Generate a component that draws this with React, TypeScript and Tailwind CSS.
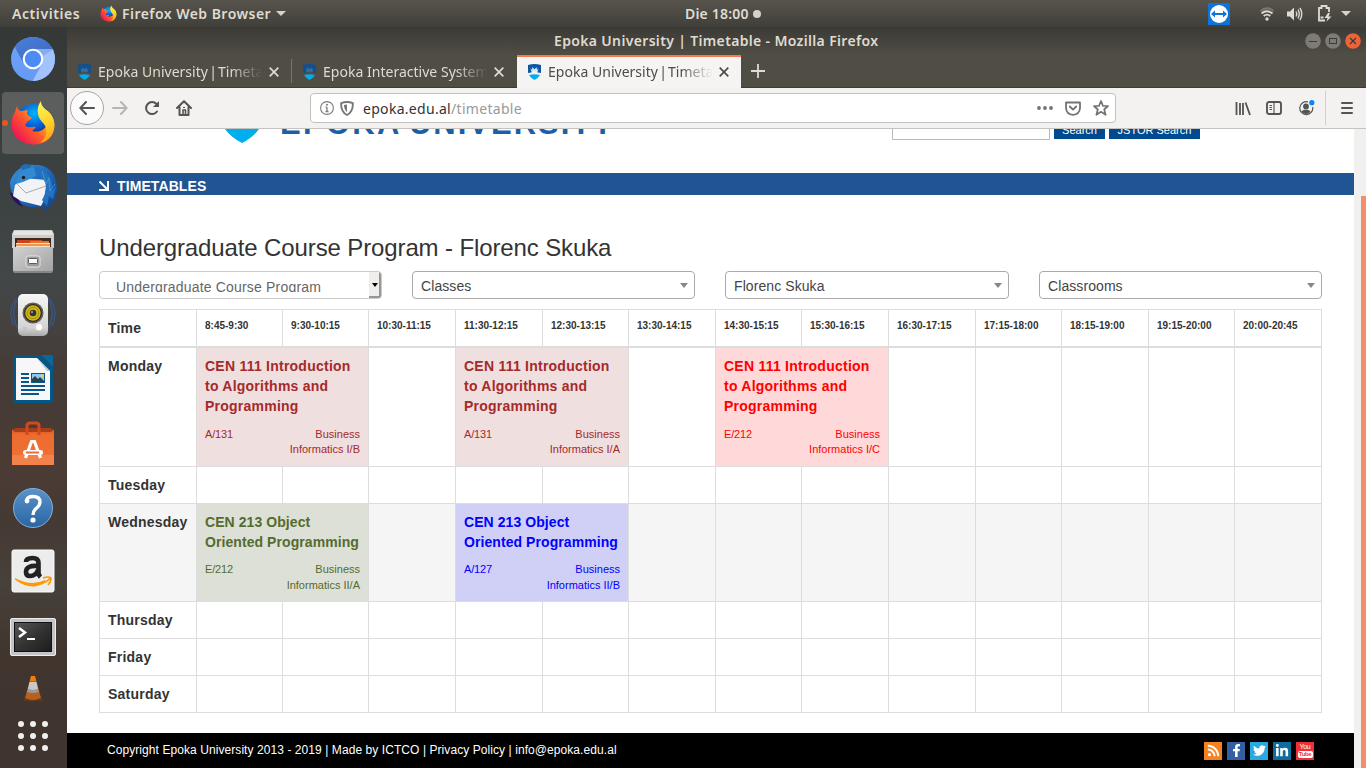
import React from "react";
import { FaFacebookF, FaTwitter, FaLinkedinIn, FaRss } from "react-icons/fa";

const ui = "font-['Noto_Sans','Open_Sans',sans-serif]";

/* ---------- dock icons ---------- */

function Chromium() {
  return (
    <svg width="46" height="46" viewBox="0 0 46 46">
      <defs>
        <clipPath id="cr"><circle cx="23" cy="23" r="22" /></clipPath>
        <linearGradient id="crt" x1="0" y1="0" x2="1" y2="1">
          <stop offset="0" stopColor="#4b80dd" /><stop offset="1" stopColor="#3b66bd" />
        </linearGradient>
        <linearGradient id="crl" x1="0" y1="0" x2="0" y2="1">
          <stop offset="0" stopColor="#72a4f8" /><stop offset="1" stopColor="#6499f5" />
        </linearGradient>
      </defs>
      <g clipPath="url(#cr)">
        <rect width="46" height="46" fill="url(#crl)" />
        <path d="M3 8 L14 28 L23 13 H46 V0 H3Z" fill="url(#crt)" />
        <path d="M23 13 H46 V46 H22 L32 28 Z" fill="#a2c3fb" />
        <path d="M23 13H44L33 20Z" fill="#86abef" />
      </g>
      <circle cx="23" cy="23" r="10.3" fill="#fff" />
      <circle cx="23" cy="23" r="8.2" fill="#4c8bf5" />
    </svg>
  );
}

function Firefox({ size = 46, id }: { size?: number; id: string }) {
  return (
    <svg width={size} height={size} viewBox="0 0 46 46">
      <defs>
        <radialGradient id={id + "g"} cx="0.5" cy="0.25" r="0.6">
          <stop offset="0" stopColor="#00b6f5" /><stop offset="0.5" stopColor="#0867df" /><stop offset="1" stopColor="#102b7c" />
        </radialGradient>
        <linearGradient id={id + "b"} x1="0.95" y1="0.1" x2="0.1" y2="0.75">
          <stop offset="0" stopColor="#ffe53a" /><stop offset="0.3" stopColor="#ffb51b" /><stop offset="0.58" stopColor="#ff6128" /><stop offset="1" stopColor="#f21851" />
        </linearGradient>
        <linearGradient id={id + "y"} x1="0.4" y1="0" x2="0.6" y2="1">
          <stop offset="0" stopColor="#fff44f" /><stop offset="0.55" stopColor="#ffd02b" /><stop offset="1" stopColor="#ff9a18" />
        </linearGradient>
      </defs>
      <circle cx="24" cy="23" r="19" fill={`url(#${id}g)`} />
      <path d="M7 6 C8 10 9 11 12 11 L18 10 C16 13 17 15 19 16 L22 18 L17 22 L15 25 C18 29 22 26 26 27 L22 31 C30 33 35 29 36 26 L40 14 C46 20 46 32 39 39 C30 47 15 46 7 38 C0 31 0 20 5 12Z" fill={`url(#${id}b)`} />
      <path d="M31 1 C31 6 34 8 38 11 C46 18 47 31 38 39 C36 41 33 42 30 43 C36 38 37 33 36 28 C35 23 29 21 28 14 C27 9 28 5 31 1Z" fill={`url(#${id}y)`} />
    </svg>
  );
}

function Thunderbird() {
  return (
    <svg width="50" height="50" viewBox="0 0 50 50">
      <defs>
        <linearGradient id="tb" x1="0" y1="0" x2="1" y2="1">
          <stop offset="0" stopColor="#3b94d8" /><stop offset="0.5" stopColor="#1f67b9" /><stop offset="1" stopColor="#143b84" />
        </linearGradient>
      </defs>
      <path d="M2 20 C5 9 16 1 27 3 C40 2 48 12 49 24 C50 36 44 45 35 49 L37 44 L31 45 C14 47 2 36 2 20Z" fill="url(#tb)" />
      <path d="M2 30 L8 34 L15 45 C8 42 3 37 2 30Z" fill="#26135c" />
      <path d="M7 23 L14 16 L39 18 L36 38 L33 44 L13 39 L5 34Z" fill="#f2f3f6" />
      <path d="M8 21 L18 31 L38 24" fill="none" stroke="#aaa" strokeWidth="1" />
      <path d="M8 22 C9 11 15 6 23 4 C30 8 31 14 24 16 L15 20Z" fill="#328bd0" />
      <path d="M12 5 C16 1 21 1 24 5 L15 8Z" fill="#226bb4" />
      <circle cx="15.5" cy="15.5" r="1.7" fill="#281a16" />
      <path d="M26 5 C39 7 46 17 44 29 L48 24 L45 37 L41 34 L39 44 L34 38 C42 25 37 15 28 13Z" fill="#2372bd" />
      <path d="M34 9L38 22L41 16L42 29L47 22" fill="none" stroke="#4a9bda" strokeWidth="0.8" />
    </svg>
  );
}

function Files() {
  return (
    <svg className="mt-px" width="44" height="46" viewBox="0 0 44 46">
      <defs>
        <linearGradient id="fl" x1="0" y1="0" x2="1" y2="1">
          <stop offset="0" stopColor="#d2d2d2" /><stop offset="1" stopColor="#a1a1a1" />
        </linearGradient>
      </defs>
      <path d="M3 1 H41 L43 5 V19 H1 V5Z" fill="#ccc" />
      <path d="M3 2H41L42 6H2Z" fill="#e4e4e4" />
      <rect x="4" y="9" width="36" height="10" fill="#3c2a20" />
      <rect x="6" y="11" width="25" height="3" fill="#c9431c" /><rect x="19" y="12" width="19" height="3" fill="#e6752c" />
      <rect x="5" y="14" width="34" height="4" fill="#f2e1cc" /><rect x="5" y="15" width="34" height="2" fill="#f0944a" />
      <path d="M2 18H42V41L41 44H3L2 41Z" fill="url(#fl)" />
      <path d="M3 42H41V44H3Z" fill="#858585" />
      <rect x="15" y="27" width="14" height="11" rx="2" fill="#9d9d9d" stroke="#e5e5e5" />
      <rect x="17.5" y="29.5" width="9" height="5" rx="1" fill="#fafafa" stroke="#5b5b5b" />
    </svg>
  );
}

function Speaker() {
  return (
    <svg width="50" height="46" viewBox="0 0 50 46">
      <defs>
        <linearGradient id="sp" x1="0" y1="0" x2="0" y2="1">
          <stop offset="0" stopColor="#f6f6f6" /><stop offset="0.8" stopColor="#d4d4d2" /><stop offset="1" stopColor="#aaa" />
        </linearGradient>
      </defs>
      <g fill="none" stroke="#37588b" strokeWidth="1.2">
        <path d="M8 7 Q-1 20 6 34" /><path d="M11 5 Q1 20 10 37" /><path d="M42 7 Q51 20 44 34" /><path d="M39 5 Q49 20 40 37" />
      </g>
      <rect x="10" y="2" width="30" height="42" rx="5" fill="url(#sp)" />
      <circle cx="25" cy="21" r="10.5" fill="#5c5c5a" />
      <circle cx="25" cy="21" r="8.3" fill="#d5b80d" stroke="#2c2b25" strokeWidth="1.2" />
      <circle cx="25" cy="21" r="5.7" fill="none" stroke="#a18b11" />
      <circle cx="25" cy="21" r="3.3" fill="#2e3438" /><circle cx="24" cy="20" r="1.2" fill="#8a9499" />
      <circle cx="31" cy="35" r="3.7" fill="#fff" stroke="#bbb" strokeWidth=".5" /><rect x="15" y="35" width="4" height="4" fill="#c4c4c4" />
    </svg>
  );
}

function Writer() {
  return (
    <svg width="42" height="48" viewBox="0 0 42 48">
      <path d="M3 0 H28 L41 13 V45 Q41 48 38 48 H4 Q1 48 1 45 V3 Q1 0 3 0Z" fill="#045687" />
      <path d="M29 0H39Q41 0 41 2V12Z" fill="#0369a3" />
      <path d="M4 3H25L38 16V45H4Z" fill="#f7f7f7" />
      <path d="M25 3L38 16L35 16Z" fill="#bcc9d2" />
      <g fill="#07578a"><rect x="9" y="18" width="8" height="2" /><rect x="9" y="22" width="8" height="2" /><rect x="9" y="26" width="8" height="2" /><rect x="9" y="30" width="24" height="2" /><rect x="9" y="34" width="24" height="2" /><rect x="9" y="38" width="18" height="2" /></g>
      <rect x="19.5" y="18.5" width="13" height="9" fill="#8cc8f0" stroke="#07578a" />
      <circle cx="30" cy="20.5" r="1.5" fill="#e6d258" />
      <path d="M20 27V24L23 21L26 24L28 22L32 26V27Z" fill="#304045" />
    </svg>
  );
}

function Software() {
  return (
    <svg className="mt-px" width="44" height="46" viewBox="0 0 44 46">
      <defs><linearGradient id="sw" x1="0" y1="0" x2="0" y2="1"><stop offset="0" stopColor="#d9501f" /><stop offset=".15" stopColor="#ee6b2d" /><stop offset="1" stopColor="#ee723a" /></linearGradient></defs>
      <path d="M1 11L4 7H40L43 11Z" fill="#a73e1b" />
      <path d="M1 8 L4 11H40L43 8 V44H1Z" fill="url(#sw)" />
      <path d="M1 34H43V44H1Z" fill="#f3814c" />
      <path d="M16 14V5Q16 2 19 2H25Q28 2 28 5V14" fill="none" stroke="#cf4a20" strokeWidth="3" />
      <path d="M14.500 37L20.500 20.500H23.500L29.500 37" fill="none" stroke="#fff" strokeWidth="3.2" />
      <rect x="12" y="29" width="20" height="5" rx="2.5" fill="#fff" /><rect x="15" y="30.5" width="13" height="2" fill="#ed6b34" />
    </svg>
  );
}

function Help() {
  return (
    <svg className="mt-[2px]" width="42" height="42" viewBox="0 0 42 42">
      <defs><linearGradient id="hp" x1="0" y1="0" x2="0" y2="1"><stop offset="0" stopColor="#5b92c9" /><stop offset="1" stopColor="#2866a3" /></linearGradient></defs>
      <circle cx="21" cy="21" r="19.5" fill="url(#hp)" stroke="#83b0da" strokeWidth="1" />
      <path d="M14.500 14Q15 9.500 21 9.500Q28 9.500 28 15Q28 18.500 24 21.500Q21 24 21 28" fill="none" stroke="#fff" strokeWidth="3.300" />
      <circle cx="15" cy="14" r="2.4" fill="#fff" /><circle cx="21" cy="33" r="2.6" fill="#fff" />
    </svg>
  );
}

function Amazon() {
  return (
    <svg width="44" height="44" viewBox="0 0 44 44">
      <rect x="1" y="1" width="42" height="42" rx="2" fill="#ececec" stroke="#fafafa" />
      <path d="M15 13Q15 9 21.500 9Q27.500 9 27.500 14V24Q27.500 26 29.500 28M27 17Q15 16 15 23Q15 27 19 27Q25 27 27 21" fill="none" stroke="#222" strokeWidth="4.600" />
      <path d="M4 29Q20 38 34 31L35.500 33Q20 43 4 30.500Z" fill="#ff9900" />
      <path d="M32 29Q38 27 40 29Q40 33 37 36M39.500 28.800L35 33" fill="none" stroke="#ff9900" strokeWidth="1.600" />
    </svg>
  );
}

function Terminal() {
  return (
    <svg width="46" height="38" viewBox="0 0 46 38">
      <defs><linearGradient id="tm" x1="0" y1="0" x2="1" y2="1"><stop offset="0" stopColor="#575757" /><stop offset=".5" stopColor="#333" /><stop offset="1" stopColor="#1d1d1d" /></linearGradient></defs>
      <rect x=".5" y=".5" width="45" height="37" rx="1.500" fill="#c4c4c8" stroke="#ececec" />
      <rect x="4" y="4" width="38" height="30" fill="#111" /><rect x="5" y="5" width="36" height="28" fill="url(#tm)" />
      <path d="M9 10L15 14.500L9 19" fill="none" stroke="#fff" strokeWidth="2.500" /><rect x="17" y="20" width="8" height="2" fill="#fff" />
    </svg>
  );
}

function Vlc() {
  return (
    <svg width="22" height="28" viewBox="0 0 22 28">
      <path d="M3 22H19L21 26H1Z" fill="#5c3a24" />
      <path d="M9 1H13L19 23Q11 27 3 23Z" fill="#b9601c" /><path d="M9 1H13L14 6H8Z" fill="#ef7d10" />
      <path d="M7.500 7H14.500L16 14Q11 16 6 14Z" fill="#c9c9c9" /><path d="M6 14Q11 16 16 14L17 17Q11 19 5 17Z" fill="#9a9a98" />
    </svg>
  );
}

function AppsGrid() {
  return (
    <div className="grid grid-cols-3 gap-[6px]">
      {Array.from({ length: 9 }, (_, i) => <span key={i} className="size-[6px] rounded-full bg-[#f0f0ee]" />)}
    </div>
  );
}

function Dock() {
  const slots = [<Chromium />, <Firefox id="dock" />, <Thunderbird />, <Files />, <Speaker />, <Writer />, <Software />, <Help />, <Amazon />];
  return (
    <nav className="flex w-[67px] shrink-0 flex-col items-center bg-[linear-gradient(180deg,#343837_0%,#3d4343_25%,#424747_34%,#444342_39%,#453b37_46%,#4b3b35_60%,#443a33_67%,#46413a_75%,#41352e_85%,#3f352e_100%)] pr-px">
      {slots.map((icon, i) => (
        <div key={i} className="flex h-16 w-full shrink-0 items-center justify-center">
          {i === 1 ? (
            <div className="relative flex h-[62px] w-[62px] items-center justify-center rounded-[4px] bg-[#5b5e5d]">
              <span className="absolute left-0 top-[28px] size-[6px] rounded-full bg-[#e95420]" />
              {icon}
            </div>
          ) : icon}
        </div>
      ))}
      <div className="flex h-[67px] items-center"><Terminal /></div>
      <div className="flex h-[38px] items-center"><Vlc /></div>
      <div className="flex h-[56px] items-center"><AppsGrid /></div>
    </nav>
  );
}

/* ---------- desktop bar ---------- */

function TopBar() {
  return (
    <header className={`${ui} flex h-[27px] shrink-0 items-center bg-linear-to-b from-[#57544c] to-[#403f3a] text-[14px] font-semibold text-[#dfdbd2]`}>
      <span className="ml-3 w-[88px] pb-px tracking-[0.58px]">Activities</span>
      <Firefox size={17} id="bar" />
      <span className="ml-[5px] w-[154px] whitespace-nowrap pb-px tracking-[0.46px]">Firefox Web Browser</span>
      <svg width="10" height="5" viewBox="0 0 10 5"><path d="M0 0H10L5 5Z" fill="#d5d2ca" /></svg>
      <span className="ml-[399px] w-[64px] whitespace-nowrap pb-px tracking-[0.2px]">Die 18:00</span>
      <span className="ml-[4px] size-2 rounded-full bg-[#d5d2ca]" />
      <div className="flex-1" />
      <svg width="22" height="22" viewBox="0 0 22 22">
        <rect width="22" height="22" fill="#0e74d8" /><circle cx="11" cy="11" r="9" fill="#fff" />
        <path d="M3 11L7 7.500V10H15V7.500L19 11L15 14.500V12H7V14.500Z" fill="#0e74d8" />
      </svg>
      <svg className="ml-[30px]" width="14" height="14" viewBox="0 0 14 14" fill="none" stroke="#dfdbd2" strokeWidth="1.800">
        <path d="M0.500 4Q7-1.500 13.500 4" stroke="#7c7971" /><path d="M1.500 6.500Q7 2 12.500 6.500" /><path d="M3.700 9Q7 6.200 10.300 9" /><circle cx="7" cy="12" r="1.700" fill="#dfdbd2" stroke="none" />
      </svg>
      <svg className="ml-[13px]" width="16" height="14" viewBox="0 0 16 14">
        <path d="M0 4.500H3L7 0.500V13.500L3 9.500H0Z" fill="#dfdbd2" />
        <path d="M9 4.500Q10.500 7 9 9.500M11 2.500Q13.500 7 11 11.500M13 0.800Q16.500 7 13 13.200" fill="none" stroke="#dfdbd2" strokeWidth="1.400" />
      </svg>
      <svg className="ml-[14px]" width="15" height="17" viewBox="0 0 15 17">
        <path d="M8 15.500H2V3H4.500V1H9.500V3H12V7" fill="none" stroke="#dfdbd2" strokeWidth="1.800" />
        <path d="M11 8L7.500 13H10.500L9.500 16.500L14.500 11.500H11.500L13 8Z" fill="#dfdbd2" /><rect x="3.500" y="11.500" width="3" height="2" fill="#dfdbd2" />
      </svg>
      <svg className="ml-[9px] mr-[15px]" width="10" height="5" viewBox="0 0 10 5"><path d="M0 0H10L5 5Z" fill="#d5d2ca" /></svg>
    </header>
  );
}

/* ---------- browser ---------- */

function Shield({ dim = false }: { dim?: boolean }) {
  return (
    <svg className="shrink-0" width="13" height="16" viewBox="0 0 13 16">
      <path d="M0 1Q6.500-1 13 1V9H0Z" fill={dim ? "#0f508f" : "#0b57a4"} />
      <path d="M2.500 4L4 6L4.500 3L6.500 5.500L8.500 3L9 6L10.500 4L9.500 8H3.500Z" fill={dim ? "#3d6c9c" : "#dfe9f3"} />
      <path d="M0 9L3 8.500Q6.500 6.500 10 8.500L13 9L12 11H1Z" fill={dim ? "#514e45" : "#f5f4f2"} />
      <path d="M1 11Q6.500 9.500 12 11Q10 14.500 6.500 16Q3 14.500 1 11Z" fill="#00aeef" />
    </svg>
  );
}

function Tab({ title, active = false }: { title: React.ReactNode; active?: boolean }) {
  return (
    <div className={active
      ? "flex h-[33px] w-[224px] items-center border-t-2 border-[#f37c4f] bg-[#f5f4f2] pb-px pl-[11px] text-[#4c4c4c]"
      : "flex h-8 w-[224px] items-center border-t-2 border-transparent pl-[11px] text-[#dfdbd2]"}>
      <Shield dim={!active} />
      <span className="ml-[7px] w-[166px] shrink-0 overflow-hidden whitespace-nowrap text-[14px] leading-5 tracking-[0.02px] [mask-image:linear-gradient(90deg,#000_80%,transparent_99%)]">{title}</span>
      <svg className="ml-[5px] shrink-0" width="10" height="10" viewBox="0 0 10 10"><path d="M.7.7L9.300 9.300M9.300.7L.7 9.300" stroke={active ? "#4c4c4c" : "#dfdbd2"} strokeWidth="1.700" /></svg>
    </div>
  );
}

const timetableTitle = <>Epoka University<span className="[word-spacing:-2.500px]"> | </span>Timetable</>;

function TitleBar() {
  return (
    <div className="flex h-7 items-center bg-linear-to-b from-[#3b3a35] to-[#504d45] pl-[487px] pr-[5px]">
      <span className="whitespace-nowrap pb-[2px] text-[14px] font-semibold tracking-[0.34px] text-[#dfdbd2]">Epoka University | Timetable - Mozilla Firefox</span>
      <div className="ml-auto flex gap-1">
        <svg width="16" height="16" viewBox="0 0 16 16"><circle cx="8" cy="8" r="7.800" fill="#7d7b73" /><path d="M4 8.500H12" stroke="#3c3b37" /></svg>
        <svg width="16" height="16" viewBox="0 0 16 16"><circle cx="8" cy="8" r="7.800" fill="#7d7b73" /><rect x="4.500" y="5.500" width="7" height="5" fill="none" stroke="#3c3b37" /></svg>
        <svg width="16" height="16" viewBox="0 0 16 16"><circle cx="8" cy="8" r="7.800" fill="#ec6339" /><path d="M5 5L11 11M11 5L5 11" stroke="#3c3b37" strokeWidth="1.300" /></svg>
      </div>
    </div>
  );
}

function Toolbar() {
  return (
    <div className="flex h-[41px] items-center border-b border-[#c5c3c0] bg-[#f3f2f1] text-[#5b5b5b]">
      <div className="ml-[3px] flex size-[34px] shrink-0 items-center justify-center rounded-full border border-[#a5a5a3] bg-[#fbfbfb]">
        <svg width="16" height="14" viewBox="0 0 16 14" fill="none" stroke="#545454" strokeWidth="2" strokeLinecap="round"><path d="M15 7H1.500M7 1L1.300 7L7 13" /></svg>
      </div>
      <svg className="ml-2" width="16" height="14" viewBox="0 0 16 14" fill="none" stroke="#b5b5b4" strokeWidth="2" strokeLinecap="round"><path d="M1 7H14.500M9 1L14.700 7L9 13" /></svg>
      <svg className="ml-4" width="16" height="16" viewBox="0 0 16 16"><path d="M13 11.500A6 6 0 1 1 12.500 4" fill="none" stroke="#545454" strokeWidth="2" strokeLinecap="round" /><path d="M15 1V7H9Z" fill="#545454" /></svg>
      <svg className="ml-4" width="16" height="16" viewBox="0 0 16 16" fill="none" stroke="#545454" strokeWidth="2" strokeLinejoin="round"><path d="M1 8L8 1.200L15 8M3.500 7V15H12.500V7" strokeLinecap="round" /><path d="M7 15V10H9.500V15" strokeWidth="1.600" /><rect x="7" y="7" width="2" height="1" fill="#545454" stroke="none" /></svg>
      <div className="ml-[118px] flex h-[30px] w-[806px] shrink-0 items-center rounded-[4px] border border-[#c3c1be] bg-white">
        <svg className="ml-[9px]" width="14" height="14" viewBox="0 0 14 14"><circle cx="7" cy="7" r="6.400" fill="none" stroke="#7c7c7c" strokeWidth="1.100" /><path d="M7 6.200V10.500M5.500 6.200H7M5.500 10.500H8.500" stroke="#7c7c7c" strokeWidth="1.300" /><circle cx="7" cy="3.800" r="1" fill="#7c7c7c" /></svg>
        <svg className="ml-[6px]" width="14" height="15" viewBox="0 0 14 15"><path d="M1.200 2.200Q7-.2 12.800 2.200Q13.300 10.500 7 14Q.7 10.500 1.200 2.200Z" fill="none" stroke="#777" strokeWidth="1.900" /><path d="M7 3.500Q4.500 3.500 4 4Q4 8.500 7 11Z" fill="#777" /></svg>
        <span className="ml-[9px] whitespace-nowrap text-[14px] tracking-[0.3px] text-[#333]">epoka.edu.al<span className="text-[#999]">/timetable</span></span>
        <div className="flex-1" />
        <svg width="16" height="4" viewBox="0 0 16 4" fill="#737373"><circle cx="2" cy="2" r="1.900" /><circle cx="8" cy="2" r="1.900" /><circle cx="14" cy="2" r="1.900" /></svg>
        <svg className="ml-3" width="16" height="15" viewBox="0 0 16 15" fill="none" stroke="#737373" strokeWidth="1.800" strokeLinejoin="round"><path d="M1 1.500H15V7Q14.500 13.500 8 13.800Q1.500 13.500 1 7Z" /><path d="M4.800 5.500L8 8.700L11.200 5.500" strokeLinecap="round" /></svg>
        <svg className="ml-3 mr-[6px]" width="16" height="16" viewBox="0 0 16 16" fill="none" stroke="#737373" strokeWidth="1.700" strokeLinejoin="round"><path d="M8 1L10 6H15L11.200 9.500L12.600 14.800L8 11.800L3.400 14.800L4.800 9.500L1 6H6Z" /></svg>
      </div>
      <div className="flex-1" />
      <svg width="16" height="15" viewBox="0 0 16 15" fill="none" stroke="#545454" strokeWidth="1.800"><path d="M1.500 1V14M5 2V14M8 2V14M10.500 1.500L15 14" /></svg>
      <svg className="ml-[15px]" width="16" height="14" viewBox="0 0 16 14" fill="none" stroke="#545454"><rect x="1" y="1" width="14" height="12" rx="2" strokeWidth="1.900" /><path d="M8 1V13M3.500 4.500H6M3.500 6.500H6M3.500 8.500H6" strokeWidth="1.100" /></svg>
      <svg className="ml-[17px]" width="16" height="16" viewBox="0 0 16 16"><path d="M9 1.800A6.500 6.500 0 1 0 13.700 7" fill="none" stroke="#545454" strokeWidth="1.200" /><circle cx="7" cy="6.500" r="2.900" fill="#545454" /><path d="M2.500 11.500Q4.500 9 7 10Q9.500 9 11.500 11.500Q9.500 14 7 14Q4.500 14 2.500 11.500Z" fill="#545454" /><circle cx="12.800" cy="2.700" r="2.600" fill="#0a84ff" /></svg>
      <span className="ml-[10px] h-[34px] w-px bg-[#d3d1cf]" />
      <svg className="ml-[15px] mr-[13px]" width="12" height="12" viewBox="0 0 12 12" stroke="#545454" strokeWidth="2" strokeLinecap="round"><path d="M1 1H11M1 6H11M1 11H11" /></svg>
    </div>
  );
}

/* ---------- page ---------- */

type Lesson = { col: number; title: string; room: string; group: string; tone: string };
type Day = { name: string; height: string; striped?: boolean; titleSpacing?: string; metaSpacing?: string; lessons: Lesson[] };

const times = ["8:45-9:30", "9:30-10:15", "10:30-11:15", "11:30-12:15", "12:30-13:15", "13:30-14:15", "14:30-15:15", "15:30-16:15", "16:30-17:15", "17:15-18:00", "18:15-19:00", "19:15-20:00", "20:00-20:45"];

const intro = "CEN 111 Introduction to Algorithms and Programming";
const oop = "CEN 213 Object Oriented Programming";

const days: Day[] = [
  { name: "Monday", height: "h-[119px]", titleSpacing: "tracking-[0.24px]", metaSpacing: "mt-[11px] leading-[15px]", lessons: [
    { col: 0, title: intro, room: "A/131", group: "Business Informatics I/B", tone: "bg-[#f0dfdf] text-[#a52a2a]" },
    { col: 3, title: intro, room: "A/131", group: "Business Informatics I/A", tone: "bg-[#f0dfdf] text-[#a52a2a]" },
    { col: 6, title: intro, room: "E/212", group: "Business Informatics I/C", tone: "bg-[#ffd9d9] text-[#ff0000]" },
  ] },
  { name: "Tuesday", height: "h-[37px]", lessons: [] },
  { name: "Wednesday", height: "h-[98px]", striped: true, titleSpacing: "tracking-[0.07px]", metaSpacing: "mt-[10px] leading-[15.5px]", lessons: [
    { col: 0, title: oop, room: "E/212", group: "Business Informatics II/A", tone: "bg-[#dde0d6] text-[#556b2f]" },
    { col: 3, title: oop, room: "A/127", group: "Business Informatics II/B", tone: "bg-[#d0d0f7] text-[#0000ff]" },
  ] },
  { name: "Thursday", height: "h-[37px]", lessons: [] },
  { name: "Friday", height: "h-[37px]", lessons: [] },
  { name: "Saturday", height: "h-[37px]", lessons: [] },
];

function DayRow({ day }: { day: Day }) {
  const cells: React.ReactNode[] = [];
  for (let c = 0; c < times.length; c++) {
    const lesson = day.lessons.find((l) => l.col === c);
    if (lesson) {
      cells.push(
        <td key={c} colSpan={2} className={`border-b border-l border-[#dddddd] p-2 pb-0 align-top ${lesson.tone}`}>
          <div className={`text-[14px] font-bold leading-5 ${day.titleSpacing}`}>{lesson.title}</div>
          <div className={`flex justify-between text-[11px] ${day.metaSpacing}`}>
            <span className="tracking-[-0.15px]">{lesson.room}</span>
            <span className="w-[78px] text-right">{lesson.group}</span>
          </div>
        </td>
      );
      c++;
    } else {
      cells.push(<td key={c} className="border-b border-l border-[#dddddd]" />);
    }
  }
  return (
    <tr className={`${day.height} ${day.striped ? "bg-[#f5f5f5]" : "bg-white"}`}>
      <th className="border-b border-l border-[#dddddd] px-2 pt-2 text-left align-top text-[14px] font-bold leading-5 tracking-[0.23px]">{day.name}</th>
      {cells}
    </tr>
  );
}

function Timetable() {
  return (
    <table className="mt-[10px] w-[1223px] table-fixed border-separate border-spacing-0 border-r border-t border-[#dddddd]">
      <colgroup>
        <col className="w-[97px]" /><col className="w-[86px]" /><col className="w-[86px]" /><col className="w-[87px]" /><col className="w-[87px]" />
        <col className="w-[86px]" /><col className="w-[87px]" /><col className="w-[86px]" /><col className="w-[87px]" /><col className="w-[87px]" />
        <col className="w-[86px]" /><col className="w-[87px]" /><col className="w-[86px]" /><col className="w-[87px]" />
      </colgroup>
      <thead>
        <tr className="h-[38px]">
          <th className="border-b-2 border-l border-[#dddddd] px-2 pt-2 text-left align-top text-[14px] font-bold leading-5 tracking-[0.2px]">Time</th>
          {times.map((t) => <th key={t} className="border-b-2 border-l border-[#dddddd] px-2 pt-2 text-left align-top text-[10px] font-bold leading-[15px]">{t}</th>)}
        </tr>
      </thead>
      <tbody>{days.map((d) => <DayRow key={d.name} day={d} />)}</tbody>
    </table>
  );
}

function Select({ label }: { label: string }) {
  return (
    <div className="flex h-7 items-center justify-between rounded-[4px] border border-[#aaaaaa] bg-white pl-2 pr-[6px] pt-px text-[14px] text-[#444]">
      <span className="pt-[2px] tracking-[0.08px]">{label}</span>
      <svg width="8" height="5" viewBox="0 0 8 5"><path d="M0 0H8L4 5Z" fill="#888" /></svg>
    </div>
  );
}

function Filters() {
  return (
    <div className="mt-[9px] grid w-[1223px] grid-cols-[283px_283px_284px_283px] gap-[30px]">
      <div className="flex h-7 justify-between overflow-hidden rounded-[4px] border border-[#cccccc]">
        <span className="ml-4 mt-[5px] h-[15px] overflow-hidden text-[14px] leading-[20px] tracking-[0.18px] text-[#666]">Undergraduate Course Program</span>
        <span className="flex w-[12px] items-center justify-center border-b-2 border-r-2 border-[#969696] bg-[#efeeed] pl-[2px] pt-[2px]">
          <svg width="6" height="4" viewBox="0 0 6 4"><path d="M0 0H6L3 4Z" fill="#000" /></svg>
        </span>
      </div>
      <Select label="Classes" />
      <Select label="Florenc Skuka" />
      <Select label="Classrooms" />
    </div>
  );
}

function SiteHeader() {
  return (
    <div className="flex h-[44px] items-start overflow-hidden">
      <svg className="ml-[157px] shrink-0" width="36" height="15" viewBox="0 0 36 15"><path d="M1 0H35Q29 8.500 18 14Q7 8.500 1 0Z" fill="#00aeef" /></svg>
      <div className="ml-[20px] mt-[-25px] flex h-10 w-[335px] shrink-0 whitespace-nowrap text-[31px] font-bold leading-10 text-[#1b5faa]">
        <span className="w-[132px] tracking-[2.300px]">EPOKA</span>
        <span className="tracking-[2px]">UNIVERSITY</span>
      </div>
      <div className="ml-[277px] flex gap-1 text-[11px] leading-[15px] text-white">
        <span className="-mt-[11px] h-[22px] w-[158px] border border-[#bbb]" />
        <span className="-mt-[11px] h-[21px] w-[51px] bg-[#004a8f] pt-[5px] text-center">Search</span>
        <span className="-mt-[11px] h-[21px] w-[91px] bg-[#004a8f] pt-[5px] text-center">JSTOR Search</span>
      </div>
    </div>
  );
}

function YouTube() {
  return (
    <span className="flex size-[18px] flex-col items-center bg-[#ee3038] font-['Liberation_Sans',sans-serif] text-white">
      <span className="mt-px text-[7px] leading-[7px] tracking-[-0.3px]">You</span>
      <span className="mt-px h-[7px] w-[15px] rounded-[2px] bg-white text-center text-[6px] font-bold leading-[7px] tracking-[-0.4px] text-[#ee3038]">Tube</span>
    </span>
  );
}

function Footer() {
  return (
    <footer className="mt-5 flex h-[35px] items-center justify-between bg-black pl-10 pr-10 text-[12px] text-white">
      <span className="-mt-px tracking-[0.072px]">Copyright Epoka University 2013 - 2019 | Made by ICTCO | Privacy Policy | info@epoka.edu.al</span>
      <div className="flex gap-[5px]">
        <span className="flex size-[18px] items-center justify-center bg-[#f58220]"><FaRss size={13} /></span>
        <span className="flex size-[18px] items-center justify-center bg-[#3460a1]"><FaFacebookF size={13} /></span>
        <span className="flex size-[18px] items-center justify-center bg-[#28a9e0]"><FaTwitter size={13} /></span>
        <span className="flex size-[18px] items-center justify-center bg-[#0e6d9e]"><FaLinkedinIn size={14} /></span>
        <YouTube />
      </div>
    </footer>
  );
}

function Page() {
  return (
    <div className="flex min-h-0 flex-1 font-['Liberation_Sans',Arial,sans-serif] text-[#333]">
      <main className="w-[1287px] overflow-hidden bg-white">
        <SiteHeader />
        <div className="flex h-[22px] items-center bg-[#205493] pl-8 pt-[3px] text-[14px] font-bold text-white">
          <svg width="10" height="10" viewBox="0 0 10 10" fill="none" stroke="#fff" strokeWidth="2"><path d="M0.500 0.500L8.500 8.500M9 0V9H0" /></svg>
          <span className="ml-2 pt-[2px] tracking-[0.1px]">TIMETABLES</span>
        </div>
        <div className="pl-8">
          <h1 className="pt-[39px] text-[24px] leading-[28px] tracking-[-0.12px]">Undergraduate Course Program - Florenc Skuka</h1>
          <Filters />
          <Timetable />
        </div>
        <Footer />
      </main>
      <div className="flex w-3 justify-end bg-[#f1f0ef] pt-[67px]"><span className="w-[5px] bg-[#f18f6c]" /></div>
    </div>
  );
}

export default function App() {
  return (
    <div className="flex h-[768px] w-[1366px] flex-col overflow-hidden">
      <TopBar />
      <div className="flex min-h-0 flex-1">
        <Dock />
        <div className={`${ui} flex min-w-0 flex-1 flex-col`}>
          <TitleBar />
          <div className="flex h-[33px] items-end border-b border-[#3c3b37] bg-[#504d45]">
            <Tab title={timetableTitle} />
            <span className="mb-1 h-6 w-px bg-[#78756d]" />
            <Tab title="Epoka Interactive System" />
            <span className="-mb-px ml-px"><Tab title={timetableTitle} active /></span>
            <svg className="mb-[9px] ml-[10px]" width="14" height="14" viewBox="0 0 14 14" stroke="#dfdbd2" strokeWidth="1.800"><path d="M7 0V14M0 7H14" /></svg>
          </div>
          <Toolbar />
          <Page />
        </div>
      </div>
    </div>
  );
}
